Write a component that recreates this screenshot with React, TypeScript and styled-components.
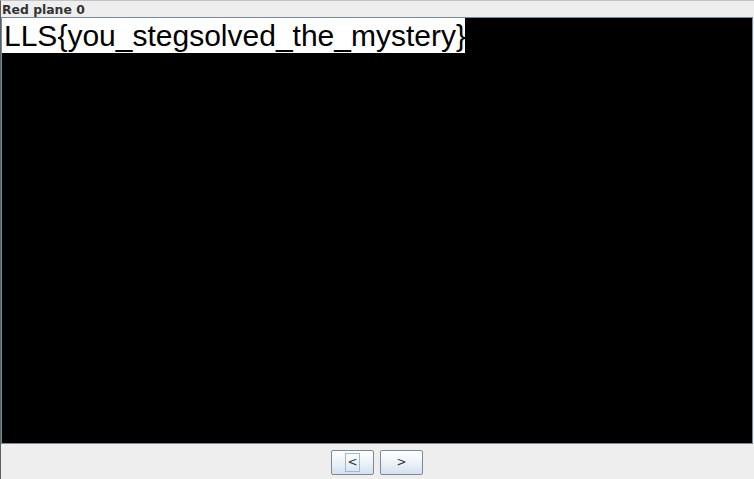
import styled, { createGlobalStyle } from "styled-components";

const GlobalStyle = createGlobalStyle`
  html, body {
    margin: 0;
    padding: 0;
    background: #eeeeee;
  }
  body {
    font-family: "DejaVu Sans", "Liberation Sans", sans-serif;
    overflow: hidden;
  }
`;

const Frame = styled.div`
  width: 754px;
  height: 479px;
  box-sizing: border-box;
  display: flex;
  flex-direction: column;
  background: #eeeeee;
  border-top: 1px solid #c4c4c4;
  border-left: 1px solid #5a5f63;
`;

const TitleBar = styled.div`
  height: 16px;
  line-height: 17px;
  padding-left: 1px;
  font-size: 12.4px;
  font-weight: bold;
  color: #333333;
  white-space: nowrap;
`;

const ImagePanel = styled.div`
  height: 427px;
  box-sizing: border-box;
  margin-right: 1px;
  border: 1px solid #7a8a99;
  background: #000000;
  overflow: hidden;
`;

const FlagBox = styled.div`
  width: 463px;
  height: 35px;
  box-sizing: border-box;
  padding-left: 2px;
  background: #ffffff;
  color: #000000;
  font-family: "Liberation Sans", Arial, sans-serif;
  font-size: 30px;
  line-height: 35px;
  white-space: nowrap;
`;

const Footer = styled.div`
  height: 35px;
  box-sizing: border-box;
  padding-top: 6px;
  padding-right: 1px;
  display: flex;
  justify-content: center;
  align-items: flex-start;
  gap: 6px;
`;

const NavButton = styled.button<{ $focused?: boolean }>`
  width: 43px;
  height: 25px;
  padding: 0;
  box-sizing: border-box;
  border: 1px solid #7a8a99;
  border-radius: 2px;
  background: linear-gradient(#ffffff 0%, #f3f7fb 35%, #d5e1ee 100%);
  display: flex;
  align-items: center;
  justify-content: center;
  font-family: "DejaVu Sans", sans-serif;
  font-size: 12px;
  color: #333333;
  cursor: pointer;

  span {
    display: inline-block;
    padding: 0 1px;
    line-height: 17px;
    border: 1px solid ${(p) => (p.$focused ? "#a3b8cc" : "transparent")};
  }
`;

function App() {
  return (
    <Frame>
      <GlobalStyle />
      <TitleBar>Red plane 0</TitleBar>
      <ImagePanel>
        <FlagBox>LLS{"{"}you_stegsolved_the_mystery{"}"}</FlagBox>
      </ImagePanel>
      <Footer>
        <NavButton $focused>
          <span>&lt;</span>
        </NavButton>
        <NavButton>
          <span>&gt;</span>
        </NavButton>
      </Footer>
    </Frame>
  );
}

export default App;
